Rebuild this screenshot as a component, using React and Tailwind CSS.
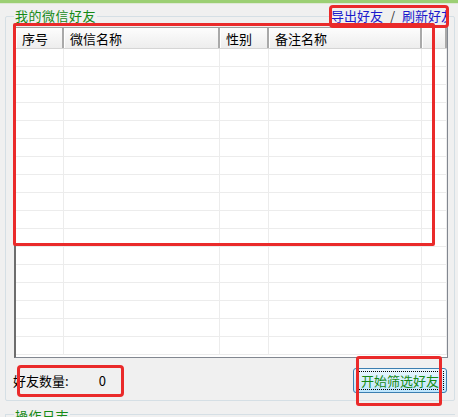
const columns = [
  { title: "序号", width: "w-[48px]" },
  { title: "微信名称", width: "w-[156px]" },
  { title: "性别", width: "w-[49px]" },
  { title: "备注名称", width: "w-[153px]" },
  { title: "", width: "flex-1" },
];

const rows = Array.from({ length: 17 }, (_, i) => i);

export default function App() {
  return (
    <div
      className="relative h-[417px] w-[458px] overflow-hidden bg-[#f0f0f0] text-[13px] text-black"
      style={{ fontFamily: '"Noto Sans CJK SC", "Liberation Sans", sans-serif' }}
    >
      <div className="h-[3px] bg-[#9ccf74]" />
      <div className="h-px bg-[#dfe8d6]" />

      {/* friends group box */}
      <div className="relative ml-[5px] mt-[12px] h-[385px] w-[450px] rounded-[2px] border border-[#d5dfe5]">
        <span className="absolute -top-[10px] left-[8px] bg-[#f0f0f0] px-px leading-[18px] tracking-[0.5px] text-[#168a16]">
          我的微信好友
        </span>
        <span className="absolute -top-[10px] right-[6px] flex items-center gap-[7px] bg-[#f0f0f0] pl-[2px] leading-[18px] text-[#1a1acc]">
          <span>导出好友</span>
          <span className="text-[#333]">/</span>
          <span className="w-[46px] overflow-hidden whitespace-nowrap">刷新好友</span>
        </span>

        <div className="ml-[8px] mt-[10px] flex h-[331px] w-[434px] flex-col border border-[#828790] border-l-2 border-l-[#6d6d6d] border-t-[#a0a0a0] bg-white">
          <div className="flex h-[21px] shrink-0 border-b border-[#d5d5d5] bg-gradient-to-b from-[#fdfdfd] to-[#ededed]">
            {columns.map((c, i) => (
              <div
                key={i}
                className={`${c.width} flex items-center border-l border-l-white border-r-2 border-r-[#a9a9a9] pl-[5px] leading-none`}
              >
                {c.title}
              </div>
            ))}
          </div>
          <div className="flex-1 overflow-hidden">
            {rows.map((r) => (
              <div key={r} className="flex h-[18px] border-b border-[#ececec]">
                {columns.map((c, i) => (
                  <div key={i} className={`${c.width} border-r border-[#ececec]`} />
                ))}
              </div>
            ))}
          </div>
        </div>

        <div className="mt-[10px] flex items-center justify-between pr-[7px]">
          <div className="ml-[7px] flex items-center leading-[18px]">
            <span>好友数量:</span>
            <span className="ml-[30px]">0</span>
          </div>
          <button className="h-[25px] w-[94px] rounded-[3px] border border-[#3c7fb1] bg-gradient-to-b from-[#eaf6fd] to-[#bee6fd] p-[2px]">
            <span className="flex h-full w-full items-center justify-center border border-dotted border-black leading-none text-[#168a16]">
              开始筛选好友
            </span>
          </button>
        </div>
      </div>

      {/* operation log group box */}
      <div className="relative ml-[5px] mt-[13px] h-[20px] w-[450px] border-t border-l border-[#d5dfe5]">
        <span className="absolute -top-[8px] left-[8px] bg-[#f0f0f0] px-px leading-[18px] tracking-[0.5px] text-[#168a16]">
          操作日志
        </span>
      </div>

      {/* red annotation boxes */}
      <div className="pointer-events-none absolute left-[13px] top-[23px] h-[223px] w-[422px] rounded-[2px] border-[3px] border-[#ea2a2a]" />
      <div className="pointer-events-none absolute left-[329px] top-[5px] h-[23px] w-[120px] rounded-[4px] border-[3px] border-[#ea2a2a]" />
      <div className="pointer-events-none absolute left-[17px] top-[365px] h-[32px] w-[107px] rounded-[4px] border-[3px] border-[#ea2a2a]" />
      <div className="pointer-events-none absolute left-[356px] top-[356px] h-[50px] w-[86px] rounded-[3px] border-[3px] border-[#ea2a2a]" />
    </div>
  );
}
